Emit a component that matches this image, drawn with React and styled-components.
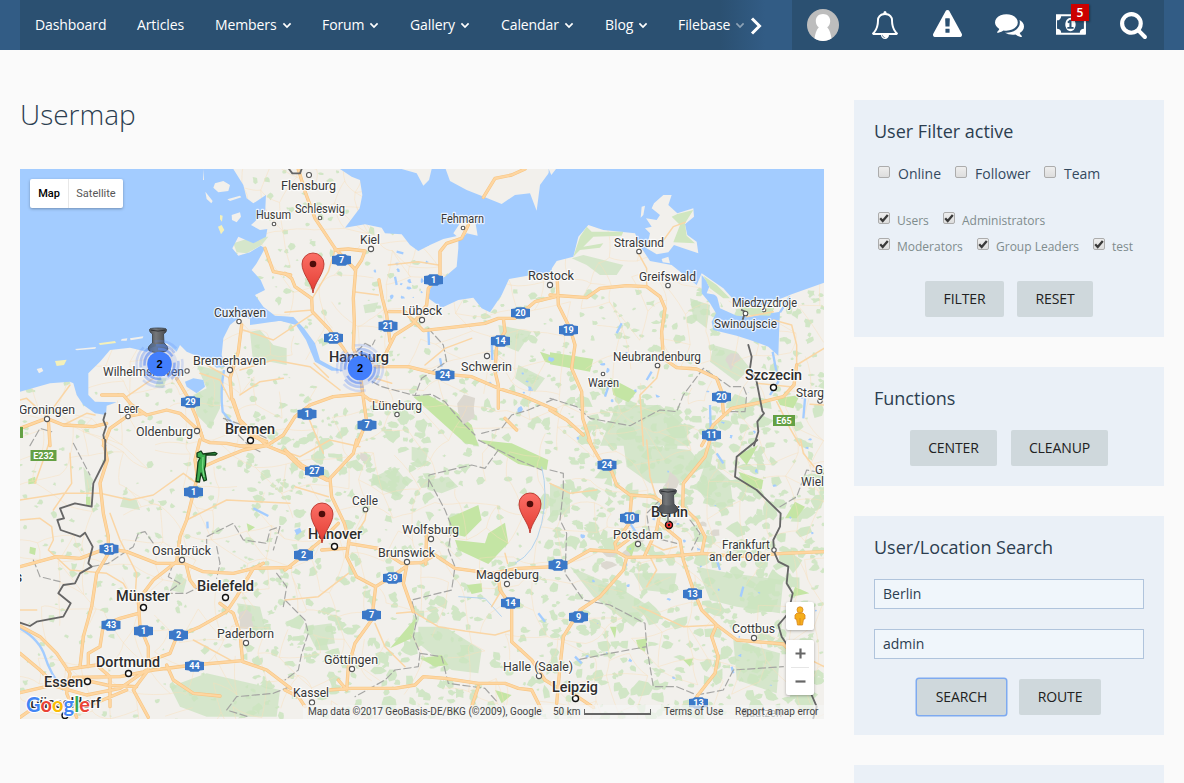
import React from 'react';
import styled, { createGlobalStyle, css } from 'styled-components';

const GlobalStyle = createGlobalStyle`
  * { box-sizing: border-box; }
  html, body { margin: 0; padding: 0; }
  body {
    background: #fafafa;
    color: #2c3e50;
    font-family: 'Open Sans', sans-serif;
    font-size: 14px;
  }
`;

const Screen = styled.div`
  display: flex;
  flex-direction: column;
  height: 783px;
  overflow: hidden;
`;

/* ---------- header ---------- */

const Header = styled.header`
  display: flex;
  flex: none;
  height: 50px;
  padding: 0 20px;
  background: #325c85;
`;

const Nav = styled.nav`
  position: relative;
  display: flex;
  width: 772px;
  overflow: hidden;
  background: linear-gradient(90deg, #2b5071 0 700px, #325c85 745px);
`;

const NavItem = styled.a`
  display: flex;
  align-items: center;
  flex: none;
  width: ${(p) => p.$w}px;
  padding: 0 0 2px 15px;
  color: #fff;
  font-weight: 500;
  letter-spacing: -0.1px;
  white-space: nowrap;

  svg { margin: 2px 0 0 5px; opacity: ${(p) => (p.$faded ? 0.45 : 1)}; }
`;

const NavArrow = styled.svg`
  align-self: center;
  flex: none;
  margin: 1px 0 0 -8px;
`;

const UserPanel = styled.div`
  display: flex;
  width: 372px;
  background: #2b5071;
`;

const PanelItem = styled.div`
  position: relative;
  display: flex;
  align-items: center;
  justify-content: center;
  width: 62px;
  padding-bottom: ${(p) => p.$lift || 0}px;
`;

const CountBadge = styled.span`
  position: absolute;
  top: 4px;
  left: 31px;
  width: 18px;
  height: 17px;
  background: #c00;
  box-shadow: 1px 1px 2px rgba(0, 0, 0, 0.35);
  color: #fff;
  font-size: 12px;
  font-weight: 600;
  line-height: 17px;
  text-align: center;
`;

/* ---------- page ---------- */

const Page = styled.div`
  display: flex;
  gap: 30px;
  min-height: 0;
  padding: 50px 20px 0;
`;

const Main = styled.main`
  width: 804px;
`;

const Title = styled.h1`
  height: 69px;
  margin: 0;
  font-size: 28px;
  font-weight: 300;
  line-height: 28px;
`;

const MapFrame = styled.div`
  position: relative;
  width: 804px;
  height: 550px;
  overflow: hidden;
  font-family: Roboto, sans-serif;
`;

const MapDrawing = styled.svg`
  display: block;
  width: 804px;
  height: 550px;
`;

const MapTypes = styled.div`
  position: absolute;
  top: 10px;
  left: 10px;
  display: flex;
  width: 93px;
  height: 29px;
  border-radius: 2px;
  background: #fff;
  box-shadow: 0 1px 3px rgba(0, 0, 0, 0.3);
`;

const MapType = styled.span`
  width: ${(p) => (p.$active ? 38 : 55)}px;
  border-left: ${(p) => (p.$active ? 0 : '1px solid #e8e8e8')};
  color: ${(p) => (p.$active ? '#000' : '#565656')};
  font-size: 11px;
  font-weight: ${(p) => (p.$active ? 500 : 400)};
  line-height: 29px;
  text-align: center;
`;

const MapTools = styled.div`
  position: absolute;
  right: 10px;
  bottom: 24px;
  display: flex;
  flex-direction: column;
  gap: 10px;
`;

const ToolBox = styled.div`
  display: flex;
  flex-direction: column;
  align-items: center;
  justify-content: center;
  gap: 8px;
  width: 28px;
  height: ${(p) => p.$h}px;
  border-radius: 2px;
  background: #fff;
  box-shadow: 0 1px 3px rgba(0, 0, 0, 0.3);

  hr { width: 18px; margin: 0; border: 0; border-top: 1px solid #e6e6e6; }
`;

const MapFooter = styled.div`
  position: absolute;
  right: 0;
  bottom: 0;
  display: flex;
  align-items: center;
  width: 521px;
  height: 14px;
  padding: 0 0 1px 5px;
  background: rgba(245, 245, 245, 0.7);
  color: #444;
  font-size: 10px;
  line-height: 12px;
  white-space: nowrap;
`;

const FooterText = styled.span`
  width: ${(p) => p.$w}px;
`;

const ScaleBar = styled.span`
  width: 67px;
  height: 6px;
  margin: 1px 13px 0 0;
  border: 1px solid #666;
  border-width: 0 1px 2px;
`;

/* ---------- sidebar ---------- */

const Sidebar = styled.aside`
  display: flex;
  flex-direction: column;
  gap: 30px;
  width: 310px;
`;

const Box = styled.section`
  flex: none;
  height: ${(p) => p.$h}px;
  padding: 20px;
  background: #eaf0f7;
`;

const BoxTitle = styled.h2`
  height: 43px;
  margin: 0;
  font-size: 18px;
  font-weight: 400;
  line-height: 23px;
`;

const CheckRow = styled.div`
  display: flex;
  align-items: flex-start;
  height: ${(p) => p.$h}px;
  padding-left: 4px;
  font-size: ${(p) => (p.$small ? 12 : 14)}px;
  color: ${(p) => (p.$small ? '#7f8c8d' : '#34495e')};
`;

const CheckLabel = styled.label`
  display: flex;
  flex: none;
  width: ${(p) => p.$w}px;
  line-height: 20px;
  white-space: nowrap;
`;

const CheckMark = styled.span`
  display: flex;
  flex: none;
  width: 12px;
  height: 12px;
  margin: ${(p) => (p.$small ? '1px 7px 0 0' : '3px 8px 0 0')};
  border: 1px solid #acacac;
  border-radius: 2px;
  background: linear-gradient(#eee, #ddd);
`;

const CheckText = styled.span`
  padding-top: ${(p) => (p.$small ? 0 : 1)}px;
`;

const Buttons = styled.div`
  display: flex;
  justify-content: center;
  gap: ${(p) => p.$gap}px;
`;

const Button = styled.button`
  width: ${(p) => p.$w}px;
  height: 36px;
  padding: 0 0 2px;
  border: 0;
  border-radius: 2px;
  background: #cfd8dc;
  color: #212121;
  font: 14px 'Open Sans', sans-serif;
  letter-spacing: -0.1px;
  ${(p) => p.$focused && css`box-shadow: 0 0 0 1.5px #7eaaf0;`}
`;

const Field = styled.input`
  display: block;
  width: 270px;
  height: 30px;
  margin: 0 0 20px;
  padding: 0 8px 2px;
  border: 1px solid #b0c4dc;
  border-radius: 0;
  background: #f0f6fb;
  color: #2c3e50;
  font: 14px 'Open Sans', sans-serif;
  outline: 0;
`;

/* ---------- icons ---------- */

const glyphs = {
  bell: ['0 0 1792 1792', 'M912 1696q0-16-16-16-59 0-101.5-42.5t-42.5-101.5q0-16-16-16t-16 16q0 73 51.5 124.5t124.5 51.5q16 0 16-16zm-666-288h1300q-266-300-266-832 0-51-24-105t-69-103-121.5-80.5-169.5-31.5-169.5 31.5-121.5 80.5-69 103-24 105q0 532-266 832zm1482 0q0 52-38 90t-90 38h-448q0 106-75 181t-181 75-181-75-75-181h-448q-52 0-90-38t-38-90q50-42 91-88t85-119.5 74.5-158.5 50-206 19.5-260q0-152 117-282.5t307-158.5q-8-19-8-39 0-40 28-68t68-28 68 28 28 68q0 20-8 39 190 28 307 158.5t117 282.5q0 139 19.5 260t50 206 74.5 158.5 85 119.5 91 88z'],
  warning: ['0 0 1792 1792', 'M1024 1375v-190q0-14-9.5-23.5t-22.5-9.5h-192q-13 0-22.5 9.5t-9.5 23.5v190q0 14 9.5 23.5t22.5 9.5h192q13 0 22.5-9.5t9.5-23.5zm-2-374l18-459q0-12-10-19-13-11-24-11h-220q-11 0-24 11-10 7-10 21l17 457q0 10 10 16.5t24 6.5h185q14 0 23.5-6.5t10.5-16.5zm-14-934l768 1408q35 63-2 126-17 29-46.5 46t-63.5 17h-1536q-34 0-63.5-17t-46.5-46q-37-63-2-126l768-1408q17-31 47-49t65-18 65 18 47 49z'],
  comments: ['0 0 1792 1792', 'M1408 768q0 139-94 257t-256.5 186.5-353.5 68.5q-86 0-176-16-124 88-278 128-36 9-86 16h-3q-11 0-20.5-8t-11.5-21q-1-3-1-6.5t.5-6.5 2-6l2.5-5 3.5-5.5 4-5 4.5-5 4-4.5q5-6 23-25t26-29.5 22.5-29 25-38.5 20.5-44q-124-72-195-177t-71-224q0-139 94-257t256.5-186.5 353.5-68.5 353.5 68.5 256.5 186.5 94 257zm384 256q0 120-71 224.5t-195 176.5q10 24 20.5 44t25 38.5 22.5 29 26 29.5 23 25q1 1 4 4.5t4.5 5 4 5 3.5 5.5l2.5 5 2 6 .5 6.5-1 6.5q-3 14-13 22t-22 7q-50-7-86-16-154-40-278-128-90 16-176 16-271 0-472-132 58 4 88 4 161 0 309-45t264-129q125-92 192-212t67-254q0-77-23-152 129 71 204 178t75 230z'],
  money: ['0 0 1920 1792', 'M704 1152h384v-96h-128v-448h-114l-148 137 77 80q42-37 55-57h2v288h-128v96zm512-256q0 70-21 142t-59.5 134-101.5 101-138 39-138-39-101.5-101-59.5-134-21-142 21-142 59.5-134 101.5-101 138-39 138 39 101.5 101 59.5 134 21 142zm512 256v-512q-106 0-181-75t-75-181h-1152q0 106-75 181t-181 75v512q106 0 181 75t75 181h1152q0-106 75-181t181-75zm128-832v1152q0 26-19 45t-45 19h-1792q-26 0-45-19t-19-45v-1152q0-26 19-45t45-19h1792q26 0 45 19t19 45z'],
  search: ['0 0 1792 1792', 'M1216 832q0-185-131.5-316.5t-316.5-131.5-316.5 131.5-131.5 316.5 131.5 316.5 316.5 131.5 316.5-131.5 131.5-316.5zm512 832q0 52-38 90t-90 38q-54 0-90-38l-343-342q-179 124-399 124-143 0-273.5-55.5t-225-150-150-225-55.5-273.5 55.5-273.5 150-225 225-150 273.5-55.5 273.5 55.5 225 150 150 225 55.5 273.5q0 220-124 399l343 343q37 37 37 90z'],
};

const Glyph = ({ name, w = 28, h = 28 }) => (
  <svg width={w} height={h} viewBox={glyphs[name][0]} fill="#fff"><path d={glyphs[name][1]} /></svg>
);

const Caret = () => (
  <svg width="10" height="7" viewBox="0 0 10 7"><path d="M1.4 1.4 5 5l3.6-3.6" fill="none" stroke="#fff" strokeWidth="1.7" /></svg>
);

const Avatar = () => (
  <svg width="32" height="32" viewBox="0 0 32 32">
    <circle cx="16" cy="16" r="16" fill="#bdbdbd" />
    <path d="M16 5c-4.400 0-7.200 2.800-7.200 7 0 3 1.200 5 3 6.300C9.200 21 8.200 25 7.500 29.400c5.200 3.300 11.800 3.300 17 0C23.800 25 22.800 21 20.200 18.300c1.800-1.300 3-3.300 3-6.300 0-4.200-2.800-7-7.200-7z" fill="#fff" />
  </svg>
);

const Check = ({ w, on, small, children }) => (
  <CheckLabel $w={w}>
    <CheckMark $small={small}>
      {on && <svg width="10" height="10" viewBox="0 0 10 10"><path d="M1.200 5.300 3.700 8 8.800 2" fill="none" stroke="#3a3a3a" strokeWidth="2.300" /></svg>}
    </CheckMark>
    <CheckText $small={small}>{children}</CheckText>
  </CheckLabel>
);

/* ---------- map data ---------- */

// The map is divided into tiles, drawn at three units per pixel.
const tiles = [
  {
    x: 20, y: 165,
    sea: [
      'M0 12H640L670 60 680 100 700 115 738 90 735 150 715 160 693 180 720 195 742 192 738 215 700 235 655 215 637 250 655 272 690 262 722 242 735 250 710 295 695 315 722 345 735 375 705 390 730 425 765 452 812 456V466L740 470 660 455 630 480 610 520 605 570 615 605 590 608 560 585 500 560 480 540 470 560 440 535 380 560 330 548 270 555 240 590 205 625 205 690 225 710 290 712 260 722 258 750 225 745 190 720 170 690 160 655 150 650 90 655 0 680Z',
      'M495 650 520 640 550 645 555 665 530 685 500 665Z',
    ],
    islands: ['M585 55 610 48 630 60 625 78 595 82 580 68Z', 'M556 80 578 108 574 115 560 102Z', 'M635 150 660 142 663 155 650 172 636 165Z', 'M165 552 228 546 226 551 170 556Z', 'M305 522 322 520 320 527 303 527Z', 'M330 520 370 514 368 520 332 526Z', 'M550 12 552 45 549 45Z', 'M622 103 660 92 664 97 630 108Z', 'M50 612 65 608 70 618 57 625Z'],
    sand: ['M594 185 605 180 613 195 603 208Z', 'M600 150 608 152 606 170 600 163Z', 'M105 588 140 584 132 600 110 603Z', 'M236 535 285 528 288 534 240 540Z'],
    green: ['M640 235 700 215 745 215 725 240 680 265 650 262Z', 'M530 600 610 620 600 730 570 790 530 750 520 690 560 670Z', 'M690 500 720 495 760 540 800 550 800 600 750 590 700 600Z', 'M415 640 440 640 430 670 405 665Z'],
    river: ['M612 615Q600 680 608 740L650 790'],
    roads: ['M735 250 760 320 812 330', 'M665 480 655 560 630 640 635 700 660 770 690 810 740 830', 'M470 640 505 700 530 760 545 812', 'M245 690 310 690 335 720 380 750 440 735 480 745 540 800', 'M250 842 270 790 320 755 370 745', 'M0 790 80 760 130 780 220 785 260 775', 'M85 765 90 842'],
    minor: ['M80 755 150 660', 'M80 755 20 700 0 705', 'M130 780 200 745 225 750', 'M320 695 400 640', 'M630 640 560 600', 'M660 690 720 650 790 640'],
    border: ['M256 745 250 765 258 785 250 810 256 842'],
    dashed: ['M610 760 680 785 740 842', 'M30 842 60 790 95 800'],
  },
  {
    x: 285, y: 165,
    sea: [
      'M165 12 200 35 225 45 232 90 224 130 180 188 240 178 290 188 300 205 350 208 375 240 400 258 435 240 475 222 520 212 520 250 515 305 480 335 440 352 430 400 470 428 520 405 565 398 590 430 615 442 650 390 672 342 740 330 800 320V12Z',
    ],
    islands: ['M350 12 395 25 415 62 432 45 440 12Z', 'M482 12 495 48 545 75 600 97 650 117 690 90 735 85 755 137 765 60 800 12Z', 'M525 175 570 165 578 212 545 205 528 225 505 205Z'],
    green: ['M235 420 280 412 270 440 240 445Z', 'M640 480 740 500 700 560 650 540Z', 'M700 600 780 640 750 680 690 640Z'],
    park: ['M385 695 430 690 500 730 560 780 580 842 540 835 440 745Z', 'M765 560 812 575 812 600 780 590Z'],
    river: ['M620 520 622 585', 'M430 490 432 540', 'M465 580 470 605', 'M330 335 335 360', 'M335 260 355 265'],
    roads: ['M40 12 60 80 90 160 150 250 212 315 205 400 208 470 205 550 225 600', 'M150 255 190 252 240 258 230 285 210 315', 'M0 325 20 340 30 365 80 400 82 440 130 490 175 550 215 610', 'M282 345 292 400 305 450 315 530', 'M230 610 300 570 330 510 385 475 425 420 430 370 465 330 465 260 485 235 530 220 550 180', 'M312 440 360 440 380 462 415 497 520 485 600 475 640 460 690 460 750 410 812 395', 'M595 97 630 40 680 30 720 12', 'M655 460 660 500 635 540 630 620 640 660 640 730', 'M270 605 370 605 450 625 560 635 640 670 720 695 812 735', 'M225 620 235 700 245 770 215 842', 'M660 760 695 795'],
    minor: ['M0 442 82 435', 'M270 640 320 655', 'M82 400 130 320 150 255', 'M310 300 400 290 460 300', 'M205 380 280 390', 'M420 600 480 550 560 520'],
    border: ['M12 12 22 25 45 25 50 12'],
    dashed: ['M215 560 240 535 260 545 270 525 M262 650 290 665 390 692 440 688 480 710 500 735 530 770 570 810', 'M430 490 475 540 485 590 410 640 390 692', 'M590 805 650 790 680 750 730 735 812 700'],
  },
  {
    x: 200, y: 300,
    sea: ['M150 42 220 48 280 51 312 85 345 130 360 180 400 202 430 212 395 212 345 185 318 120 288 75 240 62 150 75Z'],
    roads: ['M0 390 10 420 30 428 80 430 120 438 200 437 250 405 285 350 330 315 400 290 485 282 510 300 560 310', 'M0 505 60 478 130 450 200 437 260 462 300 500 380 540', 'M100 300 120 360 200 437'],
    minor: ['M342 190 385 232', 'M90 300 60 240 0 220', 'M120 210 220 180 330 200 420 270', 'M200 437 300 470 390 420 480 440', 'M130 90 220 120 340 40', 'M320 340 370 460'],
    dashed: ['M75 355 110 400 150 440 180 455', 'M150 390 200 415'],
    border: [],
  },
  {
    x: 550, y: 165,
    sea: [
      'M-4 12V325L20 288 70 275 85 215 115 180 160 195 255 205 275 250 300 288 365 300 440 360 455 325 520 370 570 425 640 422 725 388 822 353V12Z',
      'M455 330 480 360 470 385 500 390 510 430 560 452 600 455 690 440 688 480 685 572 655 545 600 525 560 512 490 495 485 470 498 445 480 415 455 385Z',
    ],
    islands: ['M312 115 340 90 365 90 355 120 382 145 430 130 432 155 405 178 412 210 440 230 445 265 400 250 372 240 355 262 320 268 290 250 300 205 285 190 305 185 288 160 320 165 330 150 305 130Z', 'M275 125 285 122 280 150 272 158Z', 'M-4 12 18 12 4 30Z', 'M335 282 355 275 360 295 338 292Z', 'M470 350 500 375 535 405 545 440 525 435 505 400 485 380Z'],
    sand: [],
    green: ['M65 280 100 270 220 300 200 330 150 330 110 300Z', 'M490 540 560 560 600 610 560 650 480 590Z', 'M200 720 330 720 400 780 420 842 150 842Z', 'M420 400 480 420 470 490 430 460Z'],
    coastGreen: ['M382 147 430 135 405 175 410 212 435 235 370 232 390 180 365 155Z', 'M70 275 90 215 110 185 125 200 220 200 215 212 130 215 100 245 160 235 150 248 90 255Z', 'M460 332 500 360 540 400 520 400 480 370Z', 'M570 430 672 428 660 452 600 450Z'],
    park: ['M0 562 130 582 120 620 0 598Z', 'M180 638 260 680 235 712 190 690Z', 'M640 435 672 430 660 460 640 450Z', 'M680 700 750 690 730 730 690 720Z'],
    river: ['M690 442 720 395', 'M668 560 685 650 660 690', 'M765 700 760 760', 'M180 650 165 695', 'M305 620 290 645', 'M480 720 482 790', 'M215 475 200 505'],
    roads: ['M0 390 110 398 150 370 230 362 290 365 330 395 345 430 335 500 340 580 380 608 440 612 500 640 515 680 520 742', 'M22 350 25 420 60 490 75 540 65 610 95 680 98 760 125 842', 'M0 735 50 765 100 810', 'M455 842 490 780 545 730 640 710 700 695 732 660 740 600'],
    minor: ['M265 265 290 310 290 360', 'M330 240 370 185 405 172', 'M740 600 740 540 725 480 670 465', 'M270 690 280 842', 'M330 600 320 640 270 690', 'M590 455 670 440', 'M680 710 720 790 750 842', 'M740 600 822 550', 'M780 718 822 720', 'M620 655 720 665'],
    border: ['M595 540 605 575 600 610 620 650 637 738 642 745 622 770 625 800 612 842', 'M575 435 585 440 578 465'],
    dashed: ['M0 700 80 725 120 760 240 782 330 735 380 740 400 690 460 610 540 665 580 665 590 690 585 740 540 740'],
  },
  {
    x: 20, y: 440,
    green: ['M310 170 350 180 360 210 300 200Z', 'M470 400 500 420 490 460 450 450Z', 'M650 490 720 500 740 580 680 560Z', 'M450 740 560 700 780 750 770 830 560 830 480 800Z', 'M190 80 220 120 200 180Z'],
    park: ['M25 118 45 110 50 130 25 133Z', 'M680 250 705 262 685 275Z', 'M30 320 48 325 45 345 28 340Z', 'M198 170 212 170 212 198 198 195Z'],
    river: ['M0 565Q60 600 75 650T130 750', 'M700 205 745 228', 'M562 245 563 265'],
    roads: ['M250 0 262 60 240 130 250 220 265 290 265 340 230 400 215 500 190 590 180 680', 'M540 0 525 60 532 110 520 160 500 240 480 290 470 365 400 420 355 480 360 560 385 620 385 690 340 750 385 832', 'M545 100 530 105', 'M0 380 110 350 180 355 260 325 320 335 410 370 490 370 550 395 640 400 700 385 812 382', 'M500 380 510 420 525 440', 'M730 370 700 385 650 470 620 515 540 560 470 590 450 640 380 665', 'M600 490 640 520 660 580 668 665 740 690 812 745', 'M160 712 300 710 400 690 520 675 668 662', 'M440 675 460 720 520 760 600 768', 'M355 520 300 535 250 555 240 620 205 640 205 680', 'M0 558 60 590 110 640 150 700 140 760 170 832', 'M0 640 60 690 110 740 200 765 300 745 380 690', 'M0 758 100 735 200 722 260 735 350 740', 'M140 688 230 675 270 710 270 800', 'M0 832 60 790 200 800 320 750'],
    minor: ['M0 180 130 160 240 160 330 180 400 165 490 100 530 130', 'M90 0 70 60 45 130', 'M0 240 60 235 95 260 100 300 85 330 150 390 260 400 310 430 335 475', 'M150 40 155 130 100 210', 'M345 475 350 400 300 300 270 220', 'M500 240 620 180 810 190', 'M0 510 50 510', 'M640 665 520 600'],
    border: ['M256 0 255 60 220 130 215 200 165 190 120 205 132 235 112 240 122 270 180 290 195 278 218 320 205 370 215 380 180 400 165 430 130 435 115 460 152 490 130 530 50 545 30 558 0 548'],
    dashed: ['M215 380 265 370 340 320 355 280 375 275 400 310', 'M560 320 560 290 640 250 670 300 740 310 750 270 780 260 760 330', 'M590 320 600 370 590 415', 'M460 370 445 410 480 430 440 460 500 460 530 445', 'M810 740 760 760 650 770 620 810 690 832', 'M160 10 210 105', 'M40 360 60 410 120 425', 'M770 400 800 440 790 500'],
  },
  {
    x: 285, y: 440,
    sea: ['M28 270 45 263 50 275 35 286Z'],
    green: ['M250 120 330 80 370 130 340 170 290 150Z', 'M430 120 490 110 520 140 470 160 430 150Z', 'M400 560 480 560 590 630 580 700 500 690 450 650 400 610Z', 'M60 560 140 550 150 610 90 620Z', 'M380 20 430 30 420 80 380 60Z'],
    park: ['M585 0 680 10 790 60 785 90 700 72 640 35Z', 'M490 235 580 195 590 240 540 290 495 280Z', 'M510 300 600 310 610 280 660 248 670 310 610 372 520 330Z', 'M315 625 395 530 380 595Z', 'M405 655 470 645 490 675 450 680Z', 'M545 435 590 430 592 455 560 462Z', 'M630 750 680 765 650 790Z'],
    stream: ['M770 80Q790 160 770 250T690 370', 'M520 470 600 475 650 530'],
    river: ['M760 520 780 545'],
    roads: ['M0 30 50 75 130 120', 'M215 0 205 40 135 115 140 170 178 250 192 300 185 350 215 410 272 440 260 540 210 610 190 680 185 750', 'M0 390 50 350 110 300 160 250', 'M110 330 180 325', 'M190 310 280 325 350 370 410 368 450 345 510 385 620 400 700 385 812 380', 'M272 440 320 410 365 378 355 430 385 515', 'M422 372 425 270', 'M640 410 645 450 680 500 680 605 740 660 780 720 812 740', 'M0 750 40 770 60 800', 'M130 750 200 745 330 745 390 735 415 710 480 715 580 730 660 730 700 745 740 750 770 810', 'M580 740 560 800', 'M185 750 160 720'],
    minor: ['M385 515 460 560 540 573 630 585 680 570', 'M245 210 240 240 215 280', 'M270 550 300 620 360 680', 'M30 140 130 170', 'M0 480 100 470 190 400', 'M650 450 620 500', 'M335 520 385 515', 'M660 340 668 370'],
    dashed: ['M430 140 432 105 560 75 600 85 640 30 580 0', 'M432 120 480 210 500 260 490 330 510 380 500 450 380 480 395 540 385 590 405 640 400 680 330 690 300 720 210 770', 'M0 480 60 540 70 580 50 640 40 690 0 720', 'M405 640 470 650 490 730 600 745 640 790', 'M640 30 700 60 770 90'],
  },
  {
    x: 550, y: 440,
    green: ['M0 130 60 150 60 220 0 230Z', 'M220 10 420 30 460 80 390 130 300 130 230 80Z', 'M470 60 540 120 550 200 480 200 440 140Z', 'M60 380 220 450 300 500 250 560 130 470Z', 'M440 380 540 400 700 420 690 520 560 500 480 480Z', 'M550 600 690 640 680 760 560 720Z', 'M250 400 380 400 370 460 280 450Z'],
    park: ['M565 45 625 15 590 75Z', 'M565 95 640 120 635 148 590 140Z', 'M705 235 735 185 765 200 740 235Z', 'M725 470 735 440 778 460Z', 'M258 600 292 595 285 635 265 625Z', 'M230 320 260 300 245 350 225 350Z', 'M400 660 430 655 420 680Z', 'M180 560 200 560 195 595Z'],
    river: ['M580 440 572 470', 'M75 650 95 670', 'M545 680 550 700', 'M240 250 260 280', 'M500 40 520 70', 'M310 240 330 190', 'M495 345 510 390'],
    roads: ['M115 0 150 60 185 95 200 135 240 165 310 170 335 185', 'M480 0 465 50 400 130 398 200 440 240 465 290 455 340', 'M245 165 238 250 195 310 200 335 230 352 340 350 460 340 560 350 700 340 822 335', 'M200 325 240 295', 'M0 382 50 370 120 330 200 335', 'M230 352 220 390 150 470 90 510 40 590 30 680 20 790', 'M330 250 390 300 400 360 430 450 455 510 500 555 560 600 700 612 712 625', 'M500 555 485 590 505 650 495 700 440 770', 'M60 755 130 802', 'M285 345 320 270 335 190'],
    minor: ['M290 0 300 110 318 170', 'M752 0 760 40 800 90', 'M300 350 320 390 290 440', 'M300 310 340 330 380 320', 'M270 500 400 560 500 555', 'M712 625 822 680', 'M0 130 60 160 140 150'],
    border: ['M622 0 560 50 555 110 620 150 692 220 690 260 670 300 672 335 685 365 715 380 710 430 728 460 715 520 685 555 695 590 712 615', 'M785 765 800 800 790 835'],
    dashed: ['M0 90 40 100 40 150 30 240 50 280 45 400 100 480 180 495 285 550 290 620 180 640 80 660', 'M290 620 310 740 380 740 440 765 520 750 550 690 700 680', 'M690 200 740 170 770 90 822 100', 'M330 180 290 220 300 290 380 310', 'M420 240 450 280 425 330'],
  },
];

// name, left, right, baseline, size, weight, then the town's dot
const towns = [
  ['Husum', 256, 291, 219, 12, 400, 274, 224, 1.8],
  ['Flensburg', 281, 336, 189.5, 13, 400, 309, 175, 2.5],
  ['Schleswig', 295, 345, 213, 12, 400, 320, 218, 1.8],
  ['Kiel', 360, 380, 244, 13, 400, 371, 249, 2.6],
  ['Fehmarn', 441, 484, 223, 12, 400, 463, 228, 1.8],
  ['Cuxhaven', 214, 266, 316.5, 12, 400, 239, 321.5, 2.2],
  ['Bremerhaven', 193, 266, 364.5, 13, 400, 230, 370, 2.6],
  ['Wilhelmshaven', 103, 184, 375.5, 12.5, 400, 187, 371, 2.2],
  ['Leer', 118, 139, 412.5, 12, 400, 128, 416.5, 2.2],
  ['Groningen', 19, 75, 413.5, 12.5, 400, 47, 419, 2.6],
  ['Oldenburg', 136, 193, 435.5, 12.5, 400, 197, 431, 2.6],
  ['Bremen', 225, 275, 434, 14, 500, 250.5, 440.5, 3],
  ['Lübeck', 402, 442, 315, 13, 400, 422, 320, 2.6],
  ['Hamburg', 329, 389, 362, 14.5, 500, 0, 0, 0],
  ['Lüneburg', 372, 422, 410, 12.5, 400, 397, 414.5, 2.2],
  ['Schwerin', 461, 512, 371, 13, 400, 487, 356, 2.6],
  ['Rostock', 528, 574, 280, 13, 400, 550, 285, 2.6],
  ['Stralsund', 614, 664, 246.5, 12.5, 400, 639, 251.5, 2.3],
  ['Greifswald', 639, 696, 280.5, 12.5, 400, 668, 285.5, 2.3],
  ['Miedzyzdroje', 732, 797, 306.5, 12, 400, 764, 310, 1.8],
  ['Swinoujscie', 714, 777, 327.5, 12, 400, 745.5, 313.5, 2.3],
  ['Neubrandenburg', 613, 701, 360.5, 12.5, 400, 657.5, 365.5, 2.3],
  ['Waren', 588, 619, 386.5, 12, 400, 603, 374, 1.8],
  ['Szczecin', 745, 802, 380, 14, 500, 773.5, 387.5, 3],
  ['Starg', 796, 824, 396.5, 12, 400, 820, 401, 2.2],
  ['Osnabrück', 152, 211, 554.5, 12.5, 400, 182, 560, 2.6],
  ['Bielefeld', 197, 254, 591, 14, 500, 225.5, 597.5, 3],
  ['Münster', 116, 170, 601, 14, 500, 143.5, 607.5, 3],
  ['Paderborn', 217, 274, 637.5, 12.5, 400, 246, 643, 2.6],
  ['Dortmund', 96, 160, 667, 14, 500, 128.5, 673.5, 3],
  ['Essen', 44, 83, 687, 14, 500, 87.5, 681.5, 3],
  ['Düsseldorf', 30, 101, 708, 14, 500, 65, 715.5, 3],
  ['s', 16, 22, 582, 14, 500, 0, 0, 0],
  ['Celle', 352, 378, 505, 13, 400, 365.5, 509.5, 2.3],
  ['Hanover', 308, 362, 539, 14, 500, 334.5, 546.5, 3],
  ['Wolfsburg', 402, 459, 533.5, 13, 400, 431, 539, 2.6],
  ['Brunswick', 378, 435, 556.5, 13, 400, 407, 562, 2.6],
  ['Magdeburg', 476, 539, 579, 13, 400, 507, 584, 2.6],
  ['Göttingen', 324, 378, 664, 13, 400, 352, 669, 2.6],
  ['Kassel', 293, 329, 696.5, 13, 400, 312, 702.5, 2.6],
  ['Halle (Saale)', 503, 573, 671, 13, 400, 539, 676, 2.6],
  ['Berlin', 651, 688, 517, 14, 500, 0, 0, 0],
  ['Potsdam', 613, 663, 538.5, 13, 400, 638, 544, 2.6],
  ['Frankfurt', 722, 770, 548.5, 12, 400, 774, 550, 2.2],
  ['an der Oder', 709, 770, 560.5, 12, 400, 0, 0, 0],
  ['Cottbus', 732, 775, 633, 12.5, 400, 754, 638, 2.6],
  ['Leipzig', 552, 598, 692, 14, 500, 575.5, 698.5, 3],
  ['G', 815, 823, 474, 12, 400, 0, 0, 0],
  ['Wiel', 801, 824, 486, 12, 400, 0, 0, 0],
  ['Bautzen', 742, 782, 717, 12, 400, 0, 0, 0],
];

const shields = [
  ['7', 341.5, 260], ['1', 433.5, 280], ['23', 333.5, 338], ['21', 388, 326], ['14', 500.5, 341], ['20', 520.5, 313],
  ['19', 568.5, 330], ['24', 445, 375], ['1', 307, 414], ['7', 367, 425], ['29', 190.5, 402], ['20', 721.5, 397],
  ['11', 711.5, 435], ['1', 193.5, 492], ['27', 314.5, 471], ['31', 109, 549], ['2', 303.5, 555], ['39', 392.5, 578],
  ['7', 371.5, 615], ['43', 111, 625], ['1', 143.5, 631], ['2', 178.5, 635], ['44', 194.5, 666], ['24', 607, 465],
  ['10', 629.5, 518], ['2', 558, 565], ['9', 578.5, 617], ['14', 510.5, 603], ['13', 692.5, 594], ['13', 698.5, 703],
];

// Seeded generator, so woods and country roads are the same on every load.
const random = (() => {
  let s = 20177;
  return () => {
    s = (s * 16807) % 2147483647;
    return s / 2147483647;
  };
})();

const blob = (x, y, r) => {
  const n = 6 + Math.floor(random() * 4);
  const pts = [];
  const squash = 0.5 + random() * 0.6;
  for (let i = 0; i < n; i += 1) {
    const a = (i / n) * Math.PI * 2;
    const q = r * (0.45 + random() * 0.85);
    pts.push(`${(x + Math.cos(a) * q).toFixed(1)} ${(y + Math.sin(a) * q * squash).toFixed(1)}`);
  }
  return `M${pts.join('L')}Z`;
};

const scatter = (x, y, w, h, n, r) =>
  Array.from({ length: n }, () => blob(x + random() * w, y + random() * h, r * (0.35 + random()))).join('');

const woods = [
  scatter(20, 370, 290, 350, 260, 3.2),
  scatter(200, 170, 250, 250, 170, 3.2),
  scatter(240, 400, 310, 320, 420, 4.2),
  scatter(450, 290, 375, 130, 230, 4),
  scatter(540, 400, 284, 320, 650, 4.8),
  scatter(270, 410, 160, 90, 60, 6),
  scatter(560, 400, 264, 310, 90, 9),
  scatter(290, 600, 180, 110, 50, 7),
].join('');

const ponds = scatter(560, 380, 260, 320, 45, 1.8) + scatter(370, 240, 60, 60, 14, 2) + scatter(470, 350, 200, 60, 16, 2.5);

const towns2d = scatter(605, 480, 110, 90, 7, 6) + blob(608, 565, 9) + blob(245, 620, 9) + blob(467, 408, 14) + blob(731, 360, 10) + blob(364, 458, 6);

const lanes = (() => {
  const step = 25;
  const grid = [];
  for (let r = 0; r < 24; r += 1) {
    grid.push(Array.from({ length: 34 }, (_, c) => [14 + c * step + (random() - 0.5) * 20, 160 + r * step + (random() - 0.5) * 20]));
  }
  let d = '';
  const link = (a, b) => {
    const mx = (a[0] + b[0]) / 2 + (random() - 0.5) * 9;
    const my = (a[1] + b[1]) / 2 + (random() - 0.5) * 9;
    d += `M${a[0].toFixed(1)} ${a[1].toFixed(1)}Q${mx.toFixed(1)} ${my.toFixed(1)} ${b[0].toFixed(1)} ${b[1].toFixed(1)}`;
  };
  for (let r = 0; r < 23; r += 1) {
    for (let c = 0; c < 33; c += 1) {
      if (random() < 0.55) link(grid[r][c], grid[r][c + 1]);
      if (random() < 0.55) link(grid[r][c], grid[r + 1][c]);
      if (random() < 0.15) link(grid[r][c], grid[r + 1][c + 1]);
    }
  }
  return d;
})();

const Tiles = ({ children }) =>
  tiles.map((t) => <g key={`${t.x}-${t.y}`} transform={`translate(${t.x} ${t.y}) scale(.33333)`}>{children(t)}</g>);

const paths = (list, props) => <path d={(list || []).join('')} {...props} />;

const Marker = ({ x, y }) => (
  <g transform={`translate(${x} ${y})`}>
    <path d="M0 0C-1-10-11-19-11-29a11 11 0 0 1 22 0C11-19 1-10 0 0Z" fill="url(#markerRed)" stroke="#b8352c" strokeWidth=".9" />
    <circle cy="-29" r="3.300" fill="#4f0d0a" />
  </g>
);

const Cluster = ({ x, y }) => (
  <g transform={`translate(${x} ${y})`}>
    <circle r="18" fill="#6f98ef" opacity=".18" />
    <g fill="none" stroke="#5b8af5">
      <circle r="23" strokeWidth="2.500" strokeDasharray="24 12.130" strokeDashoffset="6" opacity=".22" />
      <circle r="19" strokeWidth="2.500" strokeDasharray="21 8.840" strokeDashoffset="4" opacity=".4" />
      <circle r="15" strokeWidth="2.500" strokeDasharray="17 6.560" strokeDashoffset="2" opacity=".6" />
    </g>
    <circle r="12.300" fill="#427efc" />
    <text y="4" textAnchor="middle" fontSize="11" fontWeight="700" fontFamily="Liberation Sans, sans-serif">2</text>
  </g>
);

const PushPin = ({ x, y, blue }) => (
  <g transform={`translate(${x} ${y})`}>
    {!blue && <path d="M0 23V34" stroke="#777" strokeWidth="1.500" />}
    <path d="M-8.500 1.500Q-8.500 0 0 0T8.500 1.500Q9 4 5.500 6L6 15Q10 18 10 21Q9 24.500 0 24.500T-10 21Q-10 18-5.500 15L-5.500 6Q-9 4-8.500 1.500Z" fill="url(#pinGray)" stroke="#393d42" strokeWidth=".8" />
    <path d="M-7 2.200Q0 4 7 2.200" stroke="#303236" strokeWidth="1" fill="none" />
    <path d="M-5.500 15Q0 18 6 15Q9.500 18 9.500 21Q5 24 0 24T-9.500 21Q-9.500 18-5.500 15Z" fill={blue ? '#56719d' : '#52565b'} opacity=".65" />
  </g>
);

const UserMap = () => (
  <MapDrawing viewBox="20 169 804 550" fontFamily="Roboto, sans-serif">
    <defs>
      <linearGradient id="markerRed" x1="0" y1="0" x2="0" y2="1">
        <stop offset="0" stopColor="#fb6f66" /><stop offset="1" stopColor="#e33d33" />
      </linearGradient>
      <linearGradient id="pinGray">
        <stop offset="0" stopColor="#46484c" /><stop offset=".4" stopColor="#75787b" /><stop offset="1" stopColor="#3e4044" />
      </linearGradient>
    </defs>
    <rect x="20" y="169" width="804" height="550" fill="#f2f0ec" />
    <Tiles>{(t) => paths(t.green, { fill: '#d5e6cb' })}</Tiles>
    <path d={woods} fill="#cbe4c0" opacity=".85" />
    <Tiles>{(t) => paths(t.park, { fill: '#c4e5a4' })}</Tiles>
    <path d={towns2d} fill="#dcd8d0" />
    <path d={ponds} fill="#a3ccff" />
    <path d={lanes} fill="none" stroke="#f9dfb8" strokeWidth=".7" opacity=".65" />
    <Tiles>{(t) => (
      <>
        {paths(t.sea, { fill: '#a3ccff' })}
        {paths(t.river, { fill: 'none', stroke: '#a3ccff', strokeWidth: 7 })}
        {paths(t.stream, { fill: 'none', stroke: '#b3d3ee', strokeWidth: 3 })}
        {paths(t.islands, { fill: '#f2f0ec' })}
        {paths(t.coastGreen, { fill: '#d0e6c0' })}
        {paths(t.sand, { fill: '#f4f0b9' })}
      </>
    )}</Tiles>
    <g fill="none" strokeLinejoin="round" strokeLinecap="round">
      <Tiles>{(t) => (
        <>
          {paths(t.dashed, { stroke: '#a5a5a3', strokeWidth: 3.5, strokeDasharray: '22 10' })}
          {paths(t.minor, { stroke: '#fad6a6', strokeWidth: 4.5 })}
        </>
      )}</Tiles>
      <Tiles>{(t) => paths(t.roads, { stroke: '#f7c583', strokeWidth: 10 })}</Tiles>
      <Tiles>{(t) => (
        <>
          {paths(t.roads, { stroke: '#fed6a1', strokeWidth: 6.5 })}
          {paths(t.border, { stroke: '#666', strokeWidth: 5.5 })}
        </>
      )}</Tiles>
    </g>
    {shields.map(([n, x, y]) => (
      <g key={`${n}-${x}`} transform={`translate(${x} ${y})`}>
        <path d="M-9.500-4-5.500-4.500-4-5.800H4L5.500-4.500 9.500-4V4L5.500 4.500 4 5.800H-4L-5.500 4.500-9.500 4Z" fill="#3b78c8" />
        <text y="3.200" textAnchor="middle" fontSize="9" fontWeight="700" fill="#fff">{n}</text>
      </g>
    ))}
    {[['E232', 43.5, 455.5, 26], ['E65', 784, 420.5, 22], ['', 20, 432.5, 6]].map(([n, x, y, w]) => (
      <g key={x}>
        <rect x={x - w / 2} y={y - 5.5} width={w} height="11" fill="#64a044" />
        {n && <text x={x} y={y + 3.2} textAnchor="middle" fontSize="9" fontWeight="700" fill="#fff">{n}</text>}
      </g>
    ))}
    {towns.map(([name, x1, x2, y, size, weight, cx, cy, r]) => (
      <g key={name}>
        {r > 0 && <circle cx={cx} cy={cy} r={r} fill="#fff" stroke={weight > 400 ? '#111' : '#555'} strokeWidth={weight > 400 ? 1.4 : 1.1} />}
        <text
          x={x1} y={y} textLength={x2 - x1} lengthAdjust="spacingAndGlyphs"
          fontSize={size} fontWeight={weight} fill={weight > 400 ? '#2c2c2c' : '#383838'}
          stroke="#fff" strokeWidth="2.500" strokeOpacity=".75" strokeLinejoin="round" paintOrder="stroke"
        >{name}</text>
      </g>
    ))}
    <circle cx="669" cy="525" r="3.500" fill="#f33" stroke="#111" strokeWidth="1.400" />
    <circle cx="669" cy="525" r="1.200" fill="#111" />
    <Marker x={313} y={293} />
    <Marker x={322} y={543} />
    <Marker x={530} y={533} />
    <PushPin x={158} y={328} blue />
    <PushPin x={668} y={489} />
    <Cluster x={159.5} y={364} />
    <Cluster x={360} y={368} />
    <g strokeLinejoin="round">
      <path d="M197 453 201 451 203 454 215 452.500 217 453.500 215.500 455 206 455 205.500 465 204.500 469 206.500 480 204 481 201 473 199.500 482 196 481.500 197.500 468 198 462 200 458 197 457Z" fill="#3dae50" stroke="#123d18" strokeWidth="1.300" />
      <path d="M203 457 202.500 467 204 477" fill="none" stroke="#7bdc85" strokeWidth="1.200" />
    </g>
    <text x="26" y="712" textLength="64" fontFamily="Lato, sans-serif" fontSize="20" fontWeight="700" stroke="#fff" strokeWidth="2" paintOrder="stroke">
      <tspan fill="#4285f4">G</tspan><tspan fill="#ea4335">o</tspan><tspan fill="#fbbc05">o</tspan><tspan fill="#4285f4">g</tspan><tspan fill="#34a853">l</tspan><tspan fill="#ea4335">e</tspan>
    </text>
  </MapDrawing>
);

const menu = [
  ['Dashboard', 102], ['Articles', 78], ['Members', 107, 1], ['Forum', 88, 1], ['Gallery', 91, 1],
  ['Calendar', 104, 1], ['Blog', 73, 1], ['Filebase', 95, 1, 1],
];

export default function App() {
  return (
    <Screen>
      <GlobalStyle />
      <Header>
        <Nav>
          {menu.map(([label, w, sub, faded]) => (
            <NavItem key={label} $w={w} $faded={faded}>{label}{sub && <Caret />}</NavItem>
          ))}
          <NavArrow width="12" height="18" viewBox="0 0 12 18"><path d="M2 1.500 9.500 9 2 16.500" fill="none" stroke="#fff" strokeWidth="3" /></NavArrow>
        </Nav>
        <UserPanel>
          <PanelItem><Avatar /></PanelItem>
          <PanelItem><Glyph name="bell" /></PanelItem>
          <PanelItem $lift={1}><Glyph name="warning" w={29} h={29} /></PanelItem>
          <PanelItem $lift={1}><Glyph name="comments" w={29} h={29} /></PanelItem>
          <PanelItem $lift={1}><Glyph name="money" w={31} h={29} /><CountBadge>5</CountBadge></PanelItem>
          <PanelItem $lift={1}><Glyph name="search" w={29} h={29} /></PanelItem>
        </UserPanel>
      </Header>
      <Page>
        <Main>
          <Title>Usermap</Title>
          <MapFrame>
            <UserMap />
            <MapTypes><MapType $active>Map</MapType><MapType>Satellite</MapType></MapTypes>
            <MapTools>
              <ToolBox $h={28}>
                <svg width="12" height="20" viewBox="0 0 12 20">
                  <path d="M3 7H9L11 9V13H9.500L8.500 19H3.500L2.500 13H1V9Z" fill="#f5ae1c" stroke="#d9871c" strokeWidth=".8" />
                  <path d="M6 12V19" stroke="#d9871c" strokeWidth=".8" />
                  <circle cx="6" cy="3.800" r="3" fill="#f9b824" stroke="#d9871c" strokeWidth=".8" />
                </svg>
              </ToolBox>
              <ToolBox $h={55}>
                <svg width="11" height="11" viewBox="0 0 11 11"><path d="M5.500 .5V10.500M.5 5.500H10.500" stroke="#666" strokeWidth="2.200" /></svg>
                <hr />
                <svg width="11" height="11" viewBox="0 0 11 11"><path d="M.5 5.500H10.500" stroke="#666" strokeWidth="2.200" /></svg>
              </ToolBox>
            </MapTools>
            <MapFooter>
              <FooterText $w={245}>Map data ©2017 GeoBasis-DE/BKG (©2009), Google</FooterText>
              <FooterText $w={31}>50 km</FooterText>
              <ScaleBar />
              <FooterText $w={71}>Terms of Use</FooterText>
              <FooterText $w={84}>Report a map error</FooterText>
            </MapFooter>
          </MapFrame>
        </Main>
        <Sidebar>
          <Box $h={237}>
            <BoxTitle>User Filter active</BoxTitle>
            <CheckRow $h={48}>
              <Check w={77}>Online</Check><Check w={89}>Follower</Check><Check w={60}>Team</Check>
            </CheckRow>
            <CheckRow $h={26} $small>
              <Check w={65} on small>Users</Check><Check w={110} on small>Administrators</Check>
            </CheckRow>
            <CheckRow $h={44} $small>
              <Check w={99} on small>Moderators</Check><Check w={116} on small>Group Leaders</Check><Check w={45} on small>test</Check>
            </CheckRow>
            <Buttons $gap={13}><Button $w={79}>FILTER</Button><Button $w={76}>RESET</Button></Buttons>
          </Box>
          <Box $h={119}>
            <BoxTitle>Functions</BoxTitle>
            <Buttons $gap={14}><Button $w={87}>CENTER</Button><Button $w={97}>CLEANUP</Button></Buttons>
          </Box>
          <Box $h={219}>
            <BoxTitle>User/Location Search</BoxTitle>
            <Field defaultValue="Berlin" />
            <Field defaultValue="admin" />
            <Buttons $gap={13}><Button $w={89} $focused>SEARCH</Button><Button $w={82}>ROUTE</Button></Buttons>
          </Box>
          <Box $h={18} />
        </Sidebar>
      </Page>
    </Screen>
  );
}
